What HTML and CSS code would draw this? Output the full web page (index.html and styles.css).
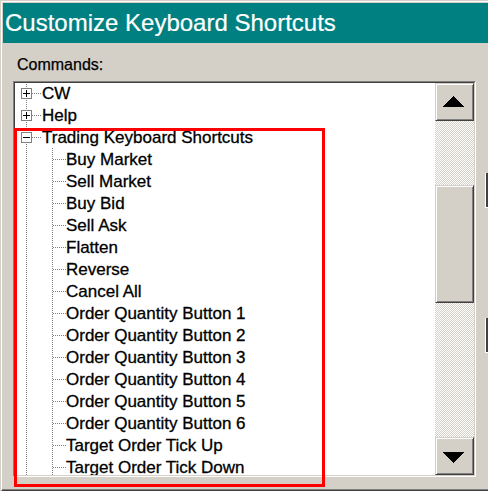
FILE: index.html
```html
<!DOCTYPE html>
<html>
<head>
<meta charset="utf-8">
<link rel="stylesheet" href="styles.css">
</head>
<body>
<div class="window">
  <div class="titlebar">Customize Keyboard Shortcuts</div>
  <div class="content">
    <div class="label">Commands:</div>
    <div class="listbox">
      <div class="listbox-inner">
        <div class="tree">
          <div class="rows">
            <div class="row root"><span class="exp plus"></span><span class="hline root-h"></span><span class="text">CW</span></div>
            <div class="row root"><span class="exp plus"></span><span class="hline root-h"></span><span class="text">Help</span></div>
            <div class="row root"><span class="exp minus"></span><span class="hline root-h"></span><span class="text">Trading Keyboard Shortcuts</span></div>
            <div class="row child"><span class="hline child-h"></span><span class="text">Buy Market</span></div>
            <div class="row child"><span class="hline child-h"></span><span class="text">Sell Market</span></div>
            <div class="row child"><span class="hline child-h"></span><span class="text">Buy Bid</span></div>
            <div class="row child"><span class="hline child-h"></span><span class="text">Sell Ask</span></div>
            <div class="row child"><span class="hline child-h"></span><span class="text">Flatten</span></div>
            <div class="row child"><span class="hline child-h"></span><span class="text">Reverse</span></div>
            <div class="row child"><span class="hline child-h"></span><span class="text">Cancel All</span></div>
            <div class="row child"><span class="hline child-h"></span><span class="text">Order Quantity Button 1</span></div>
            <div class="row child"><span class="hline child-h"></span><span class="text">Order Quantity Button 2</span></div>
            <div class="row child"><span class="hline child-h"></span><span class="text">Order Quantity Button 3</span></div>
            <div class="row child"><span class="hline child-h"></span><span class="text">Order Quantity Button 4</span></div>
            <div class="row child"><span class="hline child-h"></span><span class="text">Order Quantity Button 5</span></div>
            <div class="row child"><span class="hline child-h"></span><span class="text">Order Quantity Button 6</span></div>
            <div class="row child"><span class="hline child-h"></span><span class="text">Target Order Tick Up</span></div>
            <div class="row child"><span class="hline child-h"></span><span class="text">Target Order Tick Down</span></div>
          </div>
        </div>
        <div class="scrollbar">
          <div class="sb-btn up"><svg width="21" height="11" viewBox="0 0 21 11"><path d="M10.5 0 L21 11 L0 11 Z" fill="#000"/></svg></div>
          <div class="track track-top"></div>
          <div class="thumb"></div>
          <div class="track track-bottom"></div>
          <div class="sb-btn down"><svg width="21" height="11" viewBox="0 0 21 11"><path d="M0 0 L21 0 L10.5 11 Z" fill="#000"/></svg></div>
        </div>
      </div>
    </div>
  </div>
</div>
<div class="edge-mark mark-a"></div>
<div class="edge-mark mark-b"></div>
<div class="highlight"></div>
</body>
</html>
```

FILE: styles.css
```css
html, body {
  margin: 0;
  padding: 0;
  background: #d4d0c8;
  width: 488px;
  height: 491px;
  overflow: hidden;
}

body {
  position: relative;
  font-family: "Liberation Sans", Arial, sans-serif;
}

.window {
  box-sizing: border-box;
  margin: 1px 0 0 1px;
  height: 490px;
  border-top: 1px solid #ffffff;
  border-left: 1px solid #ffffff;
  border-bottom: 1px solid #404040;
  box-shadow: inset 0 -1px #808080;
  padding: 1px 0 0 1px;
}

.titlebar {
  height: 40px;
  line-height: 40px;
  background: #008080;
  color: #ffffff;
  font-size: 24px;
  padding-left: 2px;
  white-space: nowrap;
  -webkit-text-stroke: 0.2px #ffffff;
}

.label {
  font-size: 16px;
  line-height: 16px;
  color: #000;
  padding: 14px 0 8px 14px;
  -webkit-text-stroke: 0.25px #000;
}

.listbox {
  margin-left: 10px;
  width: 463px;
  height: 396px;
  box-sizing: border-box;
  border: 1px solid;
  border-color: #808080 #ffffff #ffffff #808080;
}

.listbox-inner {
  box-sizing: border-box;
  height: 394px;
  border: 1px solid;
  border-color: #404040 #d4d0c8 #d4d0c8 #404040;
  display: flex;
}

.tree {
  width: 420px;
  height: 392px;
  background: #ffffff;
  overflow: hidden;
}

.rows {
  margin-top: -1px;
}

.row {
  height: 22px;
  display: flex;
  align-items: center;
  font-size: 17px;
  line-height: 22px;
  color: #000;
  white-space: nowrap;
  background-repeat: no-repeat;
}

.text {
  line-height: 14px;
  margin-top: 1px;
  -webkit-text-stroke: 0.3px #000;
}

.row.root {
  padding-left: 6px;
  background-image: repeating-linear-gradient(to bottom, #808080 0 1px, transparent 1px 2px);
  background-size: 1px 100%;
  background-position: 11px 0;
}

.row.child {
  padding-left: 38px;
  background-image:
    repeating-linear-gradient(to bottom, #808080 0 1px, transparent 1px 2px),
    repeating-linear-gradient(to bottom, #808080 0 1px, transparent 1px 2px);
  background-size: 1px 100%, 1px 100%;
  background-position: 11px 0, 37px 0;
}

.exp {
  position: relative;
  box-sizing: border-box;
  width: 11px;
  height: 11px;
  border: 1px solid #808080;
  background: #ffffff;
  flex: none;
}

.exp::before {
  content: "";
  position: absolute;
  left: 1px;
  top: 4px;
  width: 7px;
  height: 1px;
  background: #000;
}

.exp.plus::after {
  content: "";
  position: absolute;
  left: 4px;
  top: 1px;
  width: 1px;
  height: 7px;
  background: #000;
}

.hline {
  height: 1px;
  flex: none;
  background-image: repeating-linear-gradient(to right, #808080 0 1px, transparent 1px 2px);
}

.root-h {
  width: 10px;
}

.child-h {
  width: 13px;
}

.scrollbar {
  width: 39px;
  height: 392px;
  display: flex;
  flex-direction: column;
}

.sb-btn, .thumb {
  box-sizing: border-box;
  background: #d4d0c8;
  border: 1px solid;
  border-color: #d4d0c8 #404040 #404040 #d4d0c8;
  box-shadow: inset 1px 1px #ffffff, inset -1px -1px #808080;
}

.sb-btn {
  height: 38px;
  display: flex;
  align-items: center;
  justify-content: center;
}

.sb-btn svg {
  display: block;
  margin-right: 3px;
  shape-rendering: crispEdges;
}

.sb-btn.up svg {
  margin-top: -1px;
}

.sb-btn.down svg {
  margin-top: 2px;
}

.thumb {
  height: 118px;
}

.track {
  background: repeating-conic-gradient(#d4d0c8 0 25%, #ffffff 0 50%) 0 0 / 2px 2px;
}

.track-top {
  height: 64px;
}

.track-bottom {
  height: 134px;
}

.edge-mark {
  position: absolute;
  left: 485px;
  width: 3px;
  box-sizing: border-box;
  border-left: 1px solid #ffffff;
  border-bottom: 1px solid #ffffff;
  background: #404040;
}

.mark-a {
  top: 173px;
  height: 35px;
}

.mark-b {
  top: 318px;
  height: 35px;
}

.highlight {
  position: absolute;
  left: 14px;
  top: 128px;
  width: 311px;
  height: 359px;
  box-sizing: border-box;
  border: 3px solid #ff0000;
}
```
